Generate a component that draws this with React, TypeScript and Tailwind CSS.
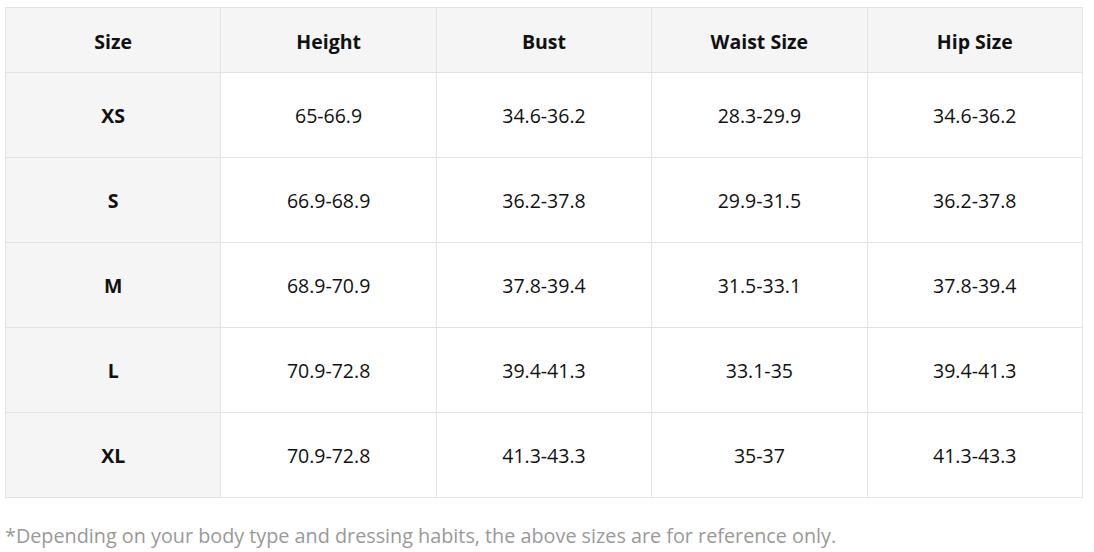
const headers = ['Size', 'Height', 'Bust', 'Waist Size', 'Hip Size'];

const rows = [
  ['XS', '65-66.9', '34.6-36.2', '28.3-29.9', '34.6-36.2'],
  ['S', '66.9-68.9', '36.2-37.8', '29.9-31.5', '36.2-37.8'],
  ['M', '68.9-70.9', '37.8-39.4', '31.5-33.1', '37.8-39.4'],
  ['L', '70.9-72.8', '39.4-41.3', '33.1-35', '39.4-41.3'],
  ['XL', '70.9-72.8', '41.3-43.3', '35-37', '41.3-43.3'],
];

export default function App() {
  return (
    <div className="w-[1094px] h-[552px] bg-white pt-[7px] pl-[5px] font-['Open_Sans',sans-serif] text-[#111]">
      <table className="w-[1078px] table-fixed border-collapse text-[19.5px]">
        <thead>
          <tr className="h-[65px] bg-[#f5f5f5]">
            {headers.map((h) => (
              <th key={h} className="border border-[#e3e3e3] pt-[3px] text-center font-bold">
                {h}
              </th>
            ))}
          </tr>
        </thead>
        <tbody>
          {rows.map((r) => (
            <tr key={r[0]} className="h-[85px]">
              {r.map((c, i) => (
                <td
                  key={i}
                  className={
                    i === 0
                      ? 'border border-[#e3e3e3] bg-[#f5f5f5] pt-[2px] text-center font-bold'
                      : 'border border-[#e3e3e3] pt-[2px] text-center'
                  }
                >
                  {c}
                </td>
              ))}
            </tr>
          ))}
        </tbody>
      </table>
      <p className="mt-[23px] text-[19.8px] leading-[30px] text-[#999]">
        *Depending on your body type and dressing habits, the above sizes are for reference only.
      </p>
    </div>
  );
}
